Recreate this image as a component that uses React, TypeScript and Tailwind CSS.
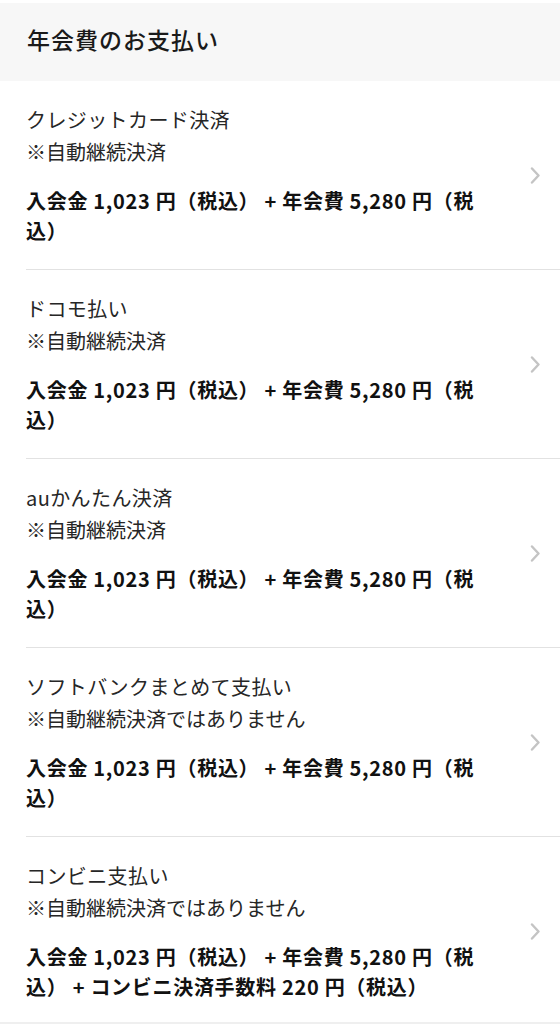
interface PaymentMethod {
  name: string;
  note: string;
  fee?: string;
}

const methods: PaymentMethod[] = [
  { name: 'クレジットカード決済', note: '※自動継続決済' },
  { name: 'ドコモ払い', note: '※自動継続決済' },
  { name: 'auかんたん決済', note: '※自動継続決済' },
  { name: 'ソフトバンクまとめて支払い', note: '※自動継続決済ではありません' },
  {
    name: 'コンビニ支払い',
    note: '※自動継続決済ではありません',
    fee: ' + コンビニ決済手数料 220 円（税込）',
  },
];

const font = { fontFamily: '"Noto Sans CJK JP", "Noto Sans", sans-serif' };

const Chevron = () => (
  <svg width="10" height="17" viewBox="0 0 10 17" fill="none" className="block">
    <path
      d="M2 1.5 L8.5 8.5 L2 15.5"
      stroke="#c4c4c4"
      strokeWidth="2.4"
      strokeLinecap="round"
      strokeLinejoin="round"
    />
  </svg>
);

const PaymentRow = ({ method, last }: { method: PaymentMethod; last: boolean }) => (
  <div className="pl-[26px]">
    <div
      className={
        'flex items-center pt-[23px] ' +
        (last ? 'pb-[20px]' : 'pb-[23px] border-b border-[#e2e2e2]')
      }
    >
      <div className="w-[464px]">
        <p className="text-[20px] leading-[32px] tracking-[0.4px] text-[#262626]">
          {method.name}
        </p>
        <p className="text-[20px] leading-[32px] text-[#262626]">{method.note}</p>
        <p className="mt-[18px] text-[20px] font-bold leading-[30px] tracking-[0.7px] text-[#111]">
          入会金 1,023 円（税込） + 年会費 5,280 円（税込）{method.fee}
        </p>
      </div>
      <div className="flex flex-1 justify-end pr-[20px]">
        <Chevron />
      </div>
    </div>
  </div>
);

export default function App() {
  return (
    <div className="min-h-[1024px] bg-[#efefef]" style={font}>
      <div className="h-[3px] bg-white" />
      <div className="flex h-[78px] items-center bg-[#f7f7f7] pb-[5px] pl-[27px]">
        <h1 className="text-[23px] font-medium tracking-[1px] text-[#1a1a1a]">
          年会費のお支払い
        </h1>
      </div>
      <div className="bg-white">
        {methods.map((m, i) => (
          <PaymentRow key={m.name} method={m} last={i === methods.length - 1} />
        ))}
      </div>
    </div>
  );
}
